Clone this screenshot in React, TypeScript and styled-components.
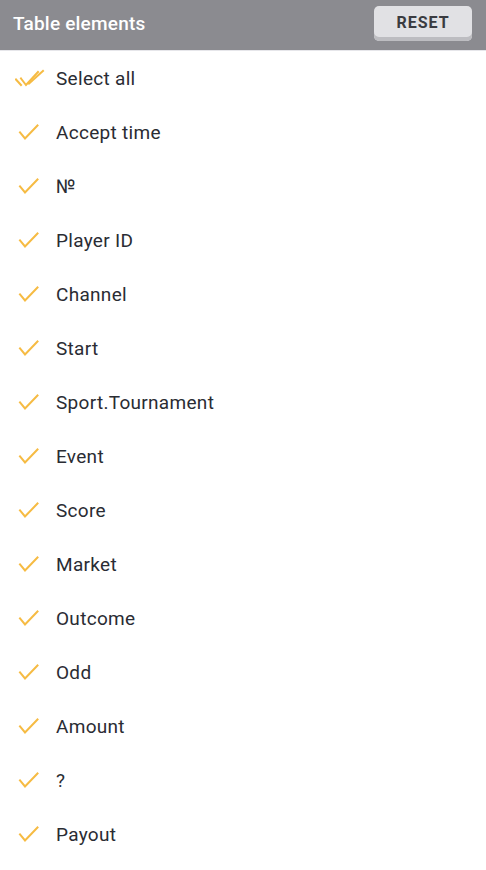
import * as React from "react";
import styled, { createGlobalStyle } from "styled-components";

const items = [
    "Accept time",
    "№",
    "Player ID",
    "Channel",
    "Start",
    "Sport.Tournament",
    "Event",
    "Score",
    "Market",
    "Outcome",
    "Odd",
    "Amount",
    "?",
    "Payout",
];

export default function App(): React.ReactElement {
    return (
        <>
            <GlobalStyle />
            <Panel>
                <Header>
                    <Title>Table elements</Title>
                    <ResetButton>RESET</ResetButton>
                </Header>
                <List>
                    <Row>
                        <IconBox>
                            <DoubleCheck />
                        </IconBox>
                        <Label>Select all</Label>
                    </Row>
                    {items.map((item) => (
                        <Row key={item}>
                            <IconBox>
                                <Check />
                            </IconBox>
                            <Label>{item}</Label>
                        </Row>
                    ))}
                </List>
            </Panel>
        </>
    );
}

function Check() {
    return (
        <svg width="24" height="24" viewBox="0 0 24 24" fill="none">
            <path d="M5 12.5 L10 18.5 L22.5 5.5" stroke="#f6bb43" strokeWidth="2" strokeLinecap="square" />
        </svg>
    );
}

function DoubleCheck() {
    return (
        <svg width="32" height="24" viewBox="0 0 32 24" fill="none">
            <path d="M1 13.5 L6 19" stroke="#f6bb43" strokeWidth="2" strokeLinecap="square" />
            <path d="M6 12.5 L11 19 L23 6" stroke="#f6bb43" strokeWidth="2" strokeLinecap="square" />
            <path d="M14 17.5 L28 5" stroke="#f6bb43" strokeWidth="2" strokeLinecap="square" />
        </svg>
    );
}

const GlobalStyle = createGlobalStyle`
    body {
        margin: 0;
        background: #ffffff;
        font-family: Roboto, "Liberation Sans", sans-serif;
    }
`;

const Panel = styled.div`
    width: 486px;
    display: flex;
    flex-direction: column;
`;

const Header = styled.div`
    height: 50px;
    background: #8b8b90;
    border-bottom: 1px solid #e6e6ea;
    display: flex;
    align-items: center;
    justify-content: space-between;
    padding: 0 14px 0 13px;
`;

const Title = styled.span`
    color: #ffffff;
    font-size: 19px;
    font-weight: 500;
    letter-spacing: 0.2px;
    margin-top: -4px;
`;

const ResetButton = styled.button`
    width: 98px;
    height: 35px;
    margin-top: -3px;
    border: none;
    border-radius: 5px;
    background: #e1e1e4;
    box-shadow: inset 0 -4px 0 #bdbdc1;
    color: #3a3b40;
    font-family: Roboto, "Liberation Sans", sans-serif;
    font-size: 16px;
    font-weight: 700;
    letter-spacing: 1px;
    padding: 0 0 3px;
`;

const List = styled.div`
    display: flex;
    flex-direction: column;
`;

const Row = styled.div`
    height: 54px;
    display: flex;
    align-items: center;
`;

const IconBox = styled.div`
    width: 56px;
    display: flex;
    justify-content: flex-start;
    padding-left: 15px;
    box-sizing: border-box;
`;

const Label = styled.span`
    color: #2a2c33;
    font-size: 19px;
    letter-spacing: 0.3px;
`;
